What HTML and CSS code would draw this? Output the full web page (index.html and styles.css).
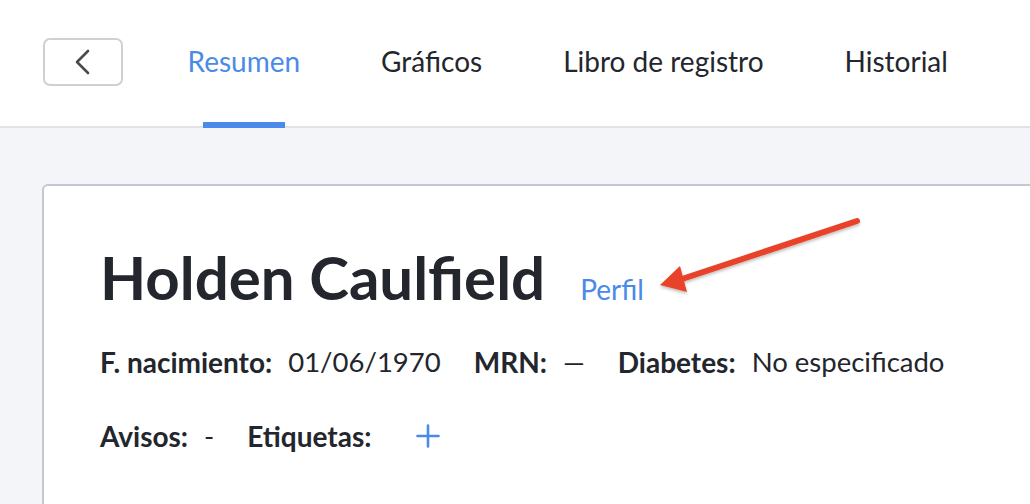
FILE: index.html
```html
<!DOCTYPE html>
<html lang="es">
<head>
<meta charset="utf-8">
<title>Resumen</title>
<link rel="stylesheet" href="styles.css">
</head>
<body>
<header class="topbar">
  <button class="back-btn" aria-label="Volver">
    <svg width="16" height="26" viewBox="0 0 16 26"><path d="M13 2 L2 13 L13 24" fill="none" stroke="#4a4a4a" stroke-width="2.6" stroke-linecap="round" stroke-linejoin="round"/></svg>
  </button>
  <nav class="tabs">
    <a class="tab active">Resumen</a>
    <a class="tab">Gráficos</a>
    <a class="tab">Libro de registro</a>
    <a class="tab">Historial</a>
  </nav>
</header>
<main class="content">
  <section class="card">
    <div class="title-row">
      <h1 class="name">Holden Caulfield</h1>
      <a class="profile-link">Perfil</a>
    </div>
    <div class="info-row">
      <span class="field"><b>F. nacimiento:</b><span class="val">01/06/1970</span></span>
      <span class="field"><b>MRN:</b><span class="val">—</span></span>
      <span class="field"><b>Diabetes:</b><span class="val">No especificado</span></span>
    </div>
    <div class="info-row second">
      <span class="field"><b>Avisos:</b><span class="val">-</span></span>
      <span class="field"><b>Etiquetas:</b>
        <svg class="plus" width="24" height="24" viewBox="0 0 24 24"><path d="M12 1.5 V22.5 M1.5 12 H22.5" stroke="#4a8ae8" stroke-width="2.6" stroke-linecap="round"/></svg>
      </span>
    </div>
  </section>
</main>
<svg class="annot-arrow" width="230" height="100" viewBox="0 0 230 100">
  <defs>
    <filter id="sh" x="-10%" y="-20%" width="120%" height="150%">
      <feDropShadow dx="0" dy="2" stdDeviation="1.5" flood-color="#000" flood-opacity="0.25"/>
    </filter>
  </defs>
  <g filter="url(#sh)">
    <line x1="217" y1="16" x2="42" y2="74" stroke="#e8432a" stroke-width="6" stroke-linecap="round"/>
    <polygon points="20,80 40,61 47,87" fill="#e8432a"/>
  </g>
</svg>
</body>
</html>
```

FILE: styles.css
```css
html, body {
  margin: 0;
  padding: 0;
}
body {
  width: 1030px;
  height: 504px;
  overflow: hidden;
  background: #f4f5f8;
  font-family: Lato, "Noto Sans", sans-serif;
  color: #23262d;
  position: relative;
}
.topbar {
  height: 126px;
  background: #fff;
  border-bottom: 2px solid #e1e3e7;
  display: flex;
  align-items: stretch;
  padding-left: 43px;
  box-sizing: content-box;
}
.back-btn {
  align-self: flex-start;
  margin-top: 38px;
  width: 80px;
  height: 48px;
  border: 2px solid #d0d0d0;
  border-radius: 7px;
  background: #fff;
  display: flex;
  align-items: center;
  justify-content: center;
  padding: 0;
}
.tabs {
  display: flex;
  margin-left: 24px;
}
.tab {
  position: relative;
  display: flex;
  align-items: center;
  padding: 0 40.5px;
  font-size: 28px;
  color: #23262d;
  margin-top: -4px;
}
.tab.active {
  color: #4a8ae8;
}
.tab.active::after {
  content: "";
  position: absolute;
  left: 50%;
  transform: translateX(-50%);
  bottom: -2px;
  width: 82px;
  height: 6px;
  background: #4a8ae8;
}
.content {
  padding: 56px 0 0 42px;
}
.card {
  width: 1100px;
  height: 380px;
  background: #fff;
  border: 2px solid #c3c8d1;
  border-radius: 6px;
  padding: 55px 0 0 56px;
  box-sizing: border-box;
}
.title-row {
  display: flex;
  align-items: baseline;
  gap: 35px;
}
.name {
  margin: 0;
  font-size: 60px;
  font-weight: 700;
  line-height: 72px;
}
.profile-link {
  font-size: 28px;
  color: #4a8ae8;
}
.info-row {
  display: flex;
  gap: 33px;
  font-size: 28px;
  line-height: 32px;
  margin-top: 33px;
}
.info-row.second {
  margin-top: 42px;
}
.field {
  display: flex;
  align-items: center;
  gap: 16px;
}
.field b {
  font-weight: 700;
}
.val {
  font-size: 27.5px;
}
.plus {
  margin-left: 28px;
  margin-top: -1px;
}
.annot-arrow {
  position: absolute;
  left: 640px;
  top: 205px;
}
```
